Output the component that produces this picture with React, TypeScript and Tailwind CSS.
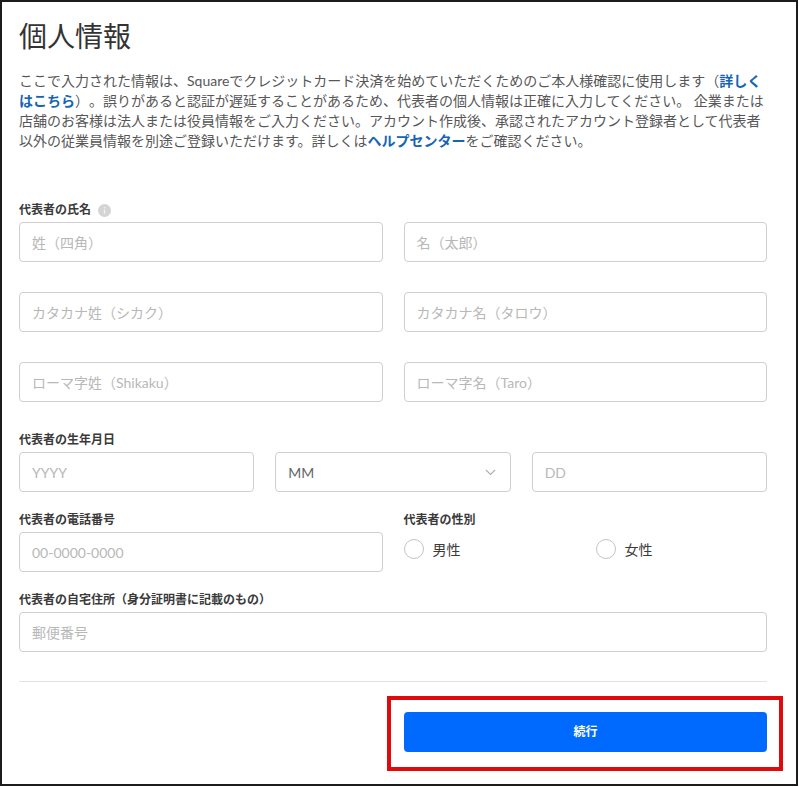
const font = "font-['Lato','Noto_Sans_CJK_JP',sans-serif]";

const TextInput = ({ placeholder, className = "" }: { placeholder: string; className?: string }) => (
  <div
    className={`h-[40px] flex items-center px-[12px] border border-[#cfcfcf] rounded-[4px] bg-white text-[14px] text-[#b8b8b8] ${className}`}
  >
    {placeholder}
  </div>
);

const Label = ({ children }: { children: React.ReactNode }) => (
  <div className="flex items-center gap-[7px] h-[16px] mb-[4px] text-[12px] leading-[16px] font-bold text-[#3a3a3a]">
    {children}
  </div>
);

const Radio = ({ label, className = "" }: { label: string; className?: string }) => (
  <div className={`flex items-center gap-[9px] ${className}`}>
    <span className="w-[20px] h-[20px] rounded-full border border-[#c4c4c4] bg-white" />
    <span className="text-[14px] text-[#3a3a3a]">{label}</span>
  </div>
);

export default function App() {
  return (
    <div className={`w-[798px] h-[786px] border-2 border-[#1c1c1c] bg-white [text-spacing-trim:space-all] ${font}`}>
      <div className="pl-[17px] pt-[14px] w-[765px]">
        <h1 className="text-[28px] leading-[40px] font-normal text-[#333]">個人情報</h1>

        <p className="mt-[15px] text-[14px] leading-[20px] text-[#575757]">
          ここで入力された情報は、Squareでクレジットカード決済を始めていただくためのご本人様確認に使用します（
          <span className="font-bold text-[#1664b4]">詳しくはこちら</span>
          ）。誤りがあると認証が遅延することがあるため、代表者の個人情報は正確に入力してください。 企業または店舗のお客様は法人または役員情報をご入力ください。アカウント作成後、承認されたアカウント登録者として代表者以外の従業員情報を別途ご登録いただけます。詳しくは
          <span className="font-bold text-[#1664b4]">ヘルプセンター</span>
          をご確認ください。
        </p>

        <div className="mt-[51px]">
          <Label>
            代表者の氏名
            <svg width="13" height="13" viewBox="0 0 13 13">
              <circle cx="6.5" cy="6.5" r="6.5" fill="#d4d4d4" />
              <rect x="5.8" y="5.5" width="1.4" height="4.2" fill="#f4f4f4" />
              <circle cx="6.5" cy="3.8" r="0.8" fill="#f4f4f4" />
            </svg>
          </Label>
          <div className="grid grid-cols-2 gap-x-[21px] gap-y-[30px]">
            <TextInput placeholder="姓（四角）" />
            <TextInput placeholder="名（太郎）" />
            <TextInput placeholder="カタカナ姓（シカク）" />
            <TextInput placeholder="カタカナ名（タロウ）" />
            <TextInput placeholder="ローマ字姓（Shikaku）" />
            <TextInput placeholder="ローマ字名（Taro）" />
          </div>
        </div>

        <div className="mt-[30px]">
          <Label>代表者の生年月日</Label>
          <div className="grid grid-cols-3 gap-x-[21px]">
            <TextInput placeholder="YYYY" />
            <div className="h-[40px] flex items-center justify-between pl-[12px] pr-[14px] border border-[#cfcfcf] rounded-[4px] text-[14px] text-[#666]">
              MM
              <svg width="11" height="7" viewBox="0 0 11 7" fill="none">
                <path d="M1 1l4.5 4.5L10 1" stroke="#b0b0b0" strokeWidth="1.2" />
              </svg>
            </div>
            <TextInput placeholder="DD" />
          </div>
        </div>

        <div className="mt-[20px] grid grid-cols-2 gap-x-[21px]">
          <div>
            <Label>代表者の電話番号</Label>
            <TextInput placeholder="00-0000-0000" />
          </div>
          <div>
            <Label>代表者の性別</Label>
            <div className="h-[40px] flex items-center -mt-[3px]">
              <Radio label="男性" className="w-[192px]" />
              <Radio label="女性" />
            </div>
          </div>
        </div>

        <div className="mt-[20px]">
          <Label>代表者の自宅住所（身分証明書に記載のもの）</Label>
          <TextInput placeholder="郵便番号" />
        </div>

        <div className="mt-[29px] h-px bg-[#e2e2e2]" />
      </div>

      <div className="flex justify-end pr-[13px] mt-[14px]">
        <div className="w-[396px] border-4 border-[#e10a0a] pt-[12px] pb-[15px] pl-[13px] pr-[12px]">
          <button className="w-full h-[40px] rounded-[4px] bg-[#006aff] text-white text-[12px] font-bold">
            続行
          </button>
        </div>
      </div>
    </div>
  );
}
